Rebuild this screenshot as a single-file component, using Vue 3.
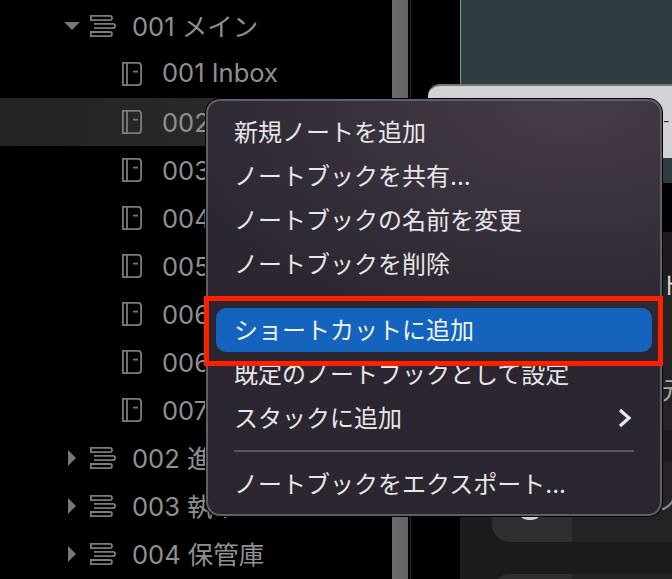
<template>
<div class="screen">
  <div class="sidebar">
    <div class="tree">
      <div v-for="row in rows" :key="row.label" class="row" :class="{ active: row.active }">
        <template v-if="row.group">
          <span class="caret-box">
            <svg v-if="row.open" width="16" height="8" viewBox="0 0 16 8"><path d="M0 0h16L8 8z" fill="#777" /></svg>
            <svg v-else class="caret-right" width="8" height="16" viewBox="0 0 8 16"><path d="M0 0l8 8-8 8z" fill="#777" /></svg>
          </span>
          <svg class="stack" width="26" height="22" viewBox="0 0 26 22" fill="none" stroke="#7c7c7c" stroke-width="1.8">
            <path d="M.9.9h19a2 2 0 0 1 0 4.2H.9z" />
            <path d="M3.9 8.8h19a2 2 0 0 1 0 4.4h-19" />
            <path d="M.9 17h19a2 2 0 0 1 0 4.2H.9z" />
          </svg>
        </template>
        <svg v-else class="book" width="20" height="24" viewBox="0 0 20 24" fill="none" stroke="#7c7c7c" stroke-width="1.8">
          <path d="M.9.9h15.2a3 3 0 0 1 3 3v16.2a3 3 0 0 1-3 3H.9z" />
          <path d="M5 .9v22.2M11 9.6h5" />
        </svg>
        <span class="label">{{ row.label }}</span>
      </div>
    </div>
    <div class="scrollbar"></div>
    <div class="gutter"></div>
  </div>

  <div class="content">
    <div class="cover"></div>
    <div class="band"></div>
    <div class="cards">
      <div class="card top"><div class="thumb"></div></div>
      <div class="card"><div class="thumb"><span class="blob"></span></div></div>
      <div class="card"><div class="thumb"></div></div>
    </div>
    <div class="sheet"><span>-</span></div>
    <span class="peek peek-a">ト</span>
    <span class="peek peek-b">元</span>
    <span class="peek peek-c">ノ</span>
  </div>

  <div class="menu">
    <template v-for="item in menu" :key="item.label">
      <div class="item" :class="{ selected: item.selected }">
        <span class="item-label">{{ item.label }}</span>
        <svg v-if="item.sub" width="14" height="20" viewBox="0 0 14 20" fill="none" stroke="#ece9ec" stroke-width="3.2"><path d="M2 2l9 8-9 8" /></svg>
      </div>
      <div v-if="item.sep" class="sep"></div>
    </template>
  </div>
  <div class="callout"></div>
</div>
</template>

<script setup>
const rows = [
  { label: '001 メイン', group: true, open: true },
  { label: '001 Inbox' },
  { label: '002 日記', active: true },
  { label: '003 メモ' },
  { label: '004 資料' },
  { label: '005 仕事' },
  { label: '006 読書' },
  { label: '006 旅行' },
  { label: '007 写真' },
  { label: '002 進行中', group: true },
  { label: '003 執筆', group: true },
  { label: '004 保管庫', group: true }
]

const menu = [
  { label: '新規ノートを追加' },
  { label: 'ノートブックを共有...' },
  { label: 'ノートブックの名前を変更' },
  { label: 'ノートブックを削除', sep: true },
  { label: 'ショートカットに追加', selected: true },
  { label: '既定のノートブックとして設定' },
  { label: 'スタックに追加', sub: true, sep: true },
  { label: 'ノートブックをエクスポート...' }
]
</script>

<style>
html, body { margin: 0; background: #000; }
</style>

<style scoped>
.screen {
  position: relative;
  display: flex;
  width: 672px;
  height: 579px;
  overflow: hidden;
  background: #000;
  font-family: Inter, "Noto Sans CJK JP", sans-serif;
  font-size: 24px;
}
.sidebar { display: flex; width: 460px; flex: none; }
.tree { width: 392px; padding-top: 2px; }
.scrollbar { width: 16px; background: linear-gradient(90deg, #6c6c6c, #626262); }
.gutter { width: 1px; margin-left: 2px; background: #2c2c2c; }

.row { display: flex; align-items: center; height: 48px; color: #909090; white-space: nowrap; font-size: 25.5px; }
.row.active { background: linear-gradient(90deg, #232323, #2e2e2e); }
.label { padding-bottom: 4px; }
.caret-box { display: flex; align-items: center; width: 26px; margin-left: 64px; }
.caret-right { margin-left: 4px; }
.stack { margin-right: 16px; }
.book { margin-left: 122px; margin-right: 20px; }

.content { position: relative; flex: 1; display: flex; flex-direction: column; background: #1c1c1c; }
.cover { height: 183px; flex: none; background: #2d3d40; border-left: 1px solid #7f9c9c; box-sizing: border-box; }
.band { height: 49px; flex: none; background: #000; }
.cards { display: flex; flex-direction: column; gap: 32px; padding: 48px 0 0 32px; }
.card { flex: none; height: 80px; background: #232323; border-radius: 18px 0 0 18px; overflow: hidden; }
.card.top { height: 150px; }
.thumb { position: relative; width: 80px; height: 100%; background: #2f2f2f; }
.blob { position: absolute; left: 26px; bottom: 22px; width: 24px; height: 10px; border-radius: 0 0 10px 10px; background: #cfcfcf; }

.sheet {
  position: absolute;
  left: -32px;
  top: 84px;
  width: 244px;
  height: 74px;
  box-sizing: border-box;
  padding-left: 235px;
  line-height: 70px;
  overflow: hidden;
  color: #222;
  font-size: 14px;
  background: #d2d2d2;
  border-top: 2px solid #777;
  border-radius: 12px 0 0 0;
}
.peek { position: absolute; color: #d8d8d8; line-height: 1; font-size: 24px; }
.peek-a { left: 200px; top: 274px; }
.peek-b { left: 202px; top: 379px; color: #aaa; }
.peek-c { left: 198px; top: 490px; color: #888; }

.menu {
  position: absolute;
  left: 206px;
  top: 99px;
  width: 456px;
  height: 417px;
  box-sizing: border-box;
  padding: 9px 8px;
  border: 2px solid #625e68;
  border-radius: 14px;
  box-shadow: 0 0 0 1px #000;
  background: radial-gradient(ellipse 420px 240px at 80% 0, #463c48, #2b2630 100%), #2b2630;
  color: #e8e6e8;
}
.item {
  display: flex;
  align-items: center;
  justify-content: space-between;
  height: 44px;
  padding: 0 20px 0 18px;
  border-radius: 10px;
  white-space: nowrap;
}
.item-label { padding-bottom: 4px; }
.item.selected { background: #1464bd; color: #f2f2f2; }
.sep { height: 2px; margin: 10px 18px; background: #5a5460; }

.callout {
  position: absolute;
  left: 204px;
  top: 296px;
  width: 459px;
  height: 70px;
  box-sizing: border-box;
  border: 5px solid #ff2000;
}
</style>
